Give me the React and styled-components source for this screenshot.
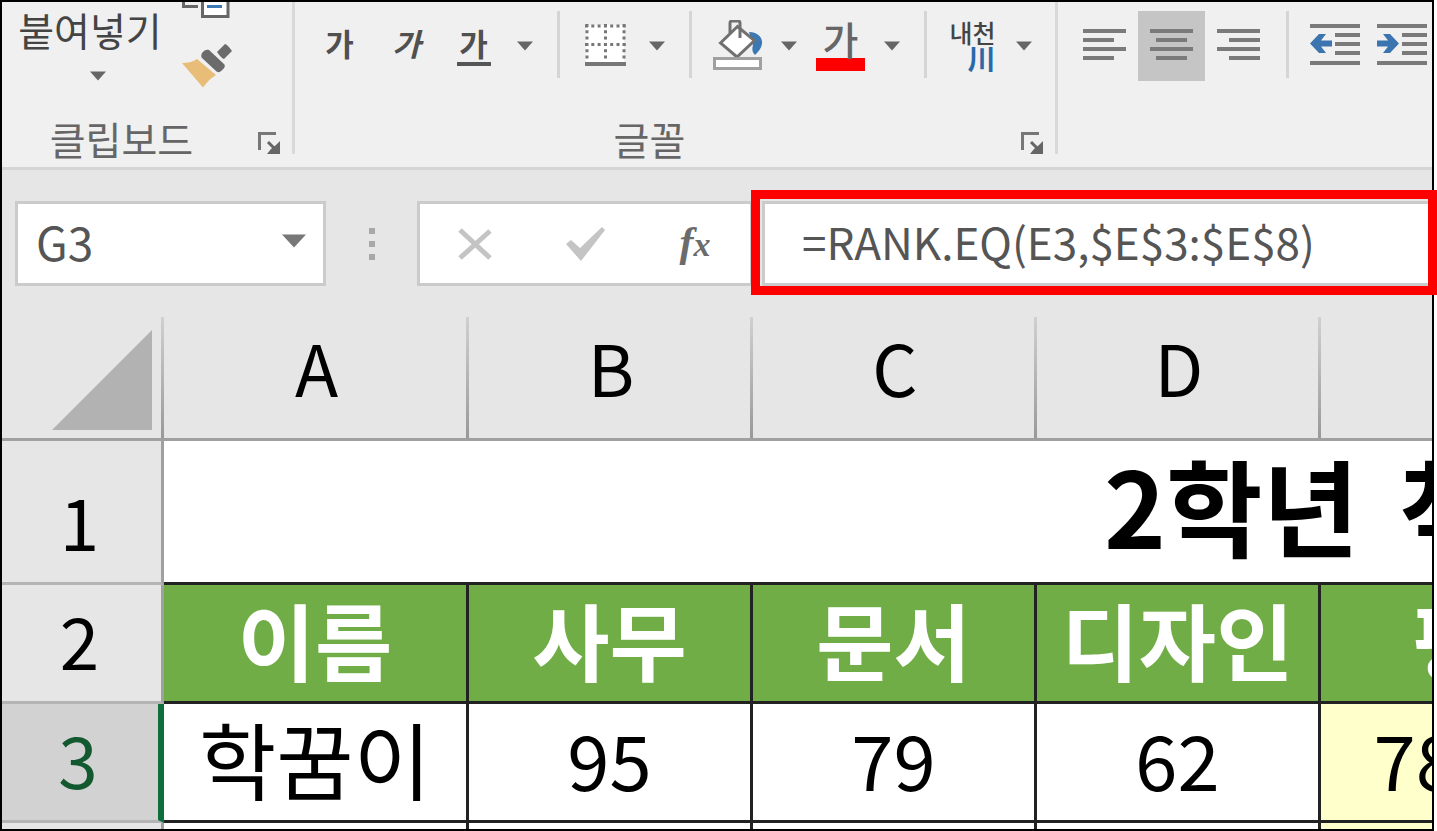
import React, {useState} from 'react';
import styled, {createGlobalStyle} from 'styled-components';

const columns = ['A', 'B', 'C', 'D', ''];
const subjects = ['이름', '사무', '문서', '디자인', '평균'];
const scores = ['학꿈이', '95', '79', '62', '78.667'];

const Arrow = () => (
	<svg width='16' height='10' viewBox='0 0 16 10' aria-hidden='true'>
		<path d='M0 0.5h16L8 9.5z' fill='#666'/>
	</svg>
)

const CopyIcon = () => (
	<svg width='48' height='16' viewBox='0 0 48 16' aria-hidden='true'>
		<path d='M1.500 0v4.500H16' fill='none' stroke='#666' strokeWidth='3'/>
		<path d='M20.500-4h25.500v18.500h-25.500z' fill='#fff' stroke='#666' strokeWidth='3'/>
		<path d='M25 4.500h15' stroke='#3c78b4' strokeWidth='3'/>
	</svg>
)

const BrushIcon = () => (
	<svg width='50' height='44' viewBox='0 0 50 44' aria-hidden='true'>
		<path d='M0 19c6 0 10-1 15-4l19 16c-5 3-9 7-13 12.500z' fill='#e8bd78'/>
		<path d='M20 9c2-3 5-4 7-3l15 14c2 2 0 5-3 7-2 2-4 1-5 0L20 14c-1-1-1-3 0-5z' fill='#6b6b6b'/>
		<path d='M35 8l8-8q2 0 7 7l-8 8q-2 0-7-7z' fill='#6b6b6b'/>
	</svg>
)

const LauncherIcon = () => (
	<svg width='22' height='22' viewBox='0 0 22 22' aria-hidden='true'>
		<path d='M1.500 18V1.500H18' fill='none' stroke='#777' strokeWidth='3'/>
		<path d='M10 10l7 7' stroke='#666' strokeWidth='3'/>
		<path d='M22 9v13H9l4-5 5-4z' fill='#666'/>
	</svg>
)

const BorderIcon = () => (
	<svg width='41' height='42' viewBox='0 0 41 42' aria-hidden='true'>
		<path d='M1 1h38v38H1z' fill='#fff'/>
		<path
			d='M0 2h41M0 20.500h41M2 0v36M20.500 0v36M39 0v36'
			fill='none'
			stroke='#777'
			strokeWidth='3'
			strokeDasharray='3 3.300'
		/>
		<path d='M0 40h41' stroke='#777' strokeWidth='4'/>
	</svg>
)

const BucketIcon = () => (
	<svg width='50' height='50' viewBox='0 0 50 50' aria-hidden='true'>
		<path d='M36 12c9 0 14 6 13 12-1 5-4 8-7 11-3-3-3-6-2-10z' fill='#3c78b4'/>
		<path d='M7.500 23L24.500 6.500l17 14L24 37z' fill='#fff' stroke='#707070' strokeWidth='3'/>
		<path d='M17 13V3q0-2 2-2h6q2 0 2 2v15' fill='none' stroke='#707070' strokeWidth='3'/>
		<path d='M1.500 38.500h46v10h-46z' fill='#fff' stroke='#a0a0a0' strokeWidth='3'/>
	</svg>
)

const alignPaths = {
	left: 'M0 2h43M0 11h31M0 20h43M0 29h31',
	center: 'M0 2h43M6 11h31M0 20h43M6 29h31',
	right: 'M0 2h43M12 11h31M0 20h43M12 29h31'
}

const AlignIcon = ({side}) => (
	<svg width='43' height='31' viewBox='0 0 43 31' aria-hidden='true'>
		<path d={alignPaths[side]} stroke='#7a7a7a' strokeWidth='4'/>
	</svg>
)

const IndentIcon = ({out}) => (
	<svg width='50' height='42' viewBox='0 0 50 42' aria-hidden='true'>
		<path d='M0 2h50M25 11h25M25 20h25M25 29h25M0 39h50' stroke='#7a7a7a' strokeWidth='4'/>
		<path
			d={out ? 'M0 19.500L9 10h7l-5 6.500h11v6H11l5 6.500H9z' : 'M22 19.500L13 10H6l5 6.500H0v6h11L6 29h7z'}
			fill='#3c74b0'
		/>
	</svg>
)

const Dropdown = ({label}) => (
	<DropButton type='button' aria-label={label}><Arrow/></DropButton>
)

const Ribbon = () => (
	<RibbonBar>
		<Group $width='290px'>
			<ClipboardTools>
				<PasteButton type='button'>붙여넣기<Arrow/></PasteButton>
				<ClipboardSide>
					<IconButton type='button' aria-label='복사'><CopyIcon/></IconButton>
					<IconButton type='button' aria-label='서식 복사'><BrushIcon/></IconButton>
				</ClipboardSide>
			</ClipboardTools>
			<GroupFooter>
				<Caption>클립보드</Caption>
				<Launcher type='button' aria-label='클립보드 옵션'><LauncherIcon/></Launcher>
			</GroupFooter>
		</Group>
		<GroupLine/>
		<Group $width='760px'>
			<Tools $start='11px'>
				<ToolButton type='button' aria-label='굵게'><Ga>가</Ga></ToolButton>
				<ToolButton type='button' aria-label='기울임꼴'><Ga $italic>가</Ga></ToolButton>
				<ToolButton type='button' aria-label='밑줄'><Ga $underline>가</Ga></ToolButton>
				<Dropdown label='밑줄 종류'/>
				<Separator/>
				<ToolButton type='button' aria-label='테두리'><BorderIcon/></ToolButton>
				<Dropdown label='테두리 종류'/>
				<Separator/>
				<ToolButton type='button' aria-label='채우기 색'><BucketIcon/></ToolButton>
				<Dropdown label='채우기 색 선택'/>
				<ToolButton type='button' aria-label='글꼴 색'><ColorGa>가</ColorGa></ToolButton>
				<Dropdown label='글꼴 색 선택'/>
				<Separator/>
				<ToolButton type='button' aria-label='윗주'>
					<Phonetic>내천<Hanja>川</Hanja></Phonetic>
				</ToolButton>
				<Dropdown label='윗주 설정'/>
			</Tools>
			<GroupFooter>
				<Caption>글꼴</Caption>
				<Launcher type='button' aria-label='글꼴 옵션'><LauncherIcon/></Launcher>
			</GroupFooter>
		</Group>
		<GroupLine/>
		<Group>
			<Tools $start='13px'>
				<ToolButton type='button' aria-label='왼쪽 맞춤'><AlignIcon side='left'/></ToolButton>
				<ToolButton type='button' aria-label='가운데 맞춤' aria-pressed='true' $active><AlignIcon side='center'/></ToolButton>
				<ToolButton type='button' aria-label='오른쪽 맞춤'><AlignIcon side='right'/></ToolButton>
				<Separator/>
				<ToolButton type='button' aria-label='내어쓰기'><IndentIcon out/></ToolButton>
				<ToolButton type='button' aria-label='들여쓰기'><IndentIcon/></ToolButton>
			</Tools>
		</Group>
	</RibbonBar>
)

const FormulaBar = () => {
	const [cell, setCell] = useState('G3');
	const [formula, setFormula] = useState('=RANK.EQ(E3,$E$3:$E$8)');

	return (
		<FormulaRow>
			<NameBox>
				<NameInput
					aria-label='이름 상자'
					value={cell}
					onChange={(e) => setCell(e.target.value)}
				/>
				<NameButton type='button' aria-label='이름 목록'>
					<svg width='24' height='14' viewBox='0 0 24 14' aria-hidden='true'>
						<path d='M0 0.500h24L12 13.500z' fill='#777'/>
					</svg>
				</NameButton>
			</NameBox>
			<Grip><i/><i/><i/></Grip>
			<FormulaActions>
				<ActionButton type='button' aria-label='취소'>
					<svg width='36' height='32' viewBox='0 0 36 32' aria-hidden='true'>
						<path d='M3 2l30 28M33 3L3 30' fill='none' stroke='#c4c4c4' strokeWidth='5'/>
					</svg>
				</ActionButton>
				<ActionButton type='button' aria-label='입력'>
					<svg width='40' height='34' viewBox='0 0 40 34' aria-hidden='true'>
						<path d='M1 17l5-4 9 8L37 0l3 3-24 31z' fill='#c4c4c4'/>
					</svg>
				</ActionButton>
				<ActionButton type='button' aria-label='함수 삽입'>
					<Fx>f<small>x</small></Fx>
				</ActionButton>
			</FormulaActions>
			<FormulaField>
				<FormulaInput
					aria-label='수식 입력줄'
					value={formula}
					onChange={(e) => setFormula(e.target.value)}
				/>
				<Highlight/>
			</FormulaField>
		</FormulaRow>
	)
}

const Sheet = () => (
	<SheetArea>
		<Grid>
			<colgroup>
				<Col $width='162px'/>
				<Col $width='305px'/>
				<Col $width='284px'/>
				<Col $width='284px'/>
				<Col $width='284px'/>
				<Col $width='340px'/>
			</colgroup>
			<thead>
				<tr>
					<Corner>
						<svg width='100' height='100' viewBox='0 0 100 100' aria-hidden='true'>
							<path d='M100 0v100H0z' fill='#b2b2b2'/>
						</svg>
					</Corner>
					{columns.map((name, i) => <ColumnHead key={i} scope='col'>{name}</ColumnHead>)}
				</tr>
			</thead>
			<tbody>
				<Row $height='144px'>
					<RowHead scope='row'>1</RowHead>
					<TitleCell colSpan={5}>2학년 <TitleWord>척</TitleWord></TitleCell>
				</Row>
				<Row $height='119px'>
					<RowHead scope='row'>2</RowHead>
					{subjects.map((name) => <SubjectCell key={name}>{name}</SubjectCell>)}
				</Row>
				<Row $height='119px'>
					<RowHead scope='row' $active>3</RowHead>
					{scores.map((value, i) => (
						<Cell key={value} $hangul={i === 0} $average={i === 4}>{value}</Cell>
					))}
				</Row>
				<Row $height='119px'>
					<RowHead scope='row' aria-label='4'/>
					{scores.map((value, i) => <Cell key={value} $average={i === 4}/>)}
				</Row>
			</tbody>
		</Grid>
	</SheetArea>
)

const App = () => (
	<>
		<GlobalStyle/>
		<Frame>
			<Ribbon/>
			<FormulaBar/>
			<Sheet/>
		</Frame>
	</>
)

const GlobalStyle = createGlobalStyle`
	*, *::before, *::after {
		box-sizing: border-box;
	}
	body {
		margin: 0;
		background: #fff;
		font-family: 'Noto Sans CJK KR', 'Noto Sans', sans-serif;
	}
	button, input {
		margin: 0;
		padding: 0;
		border: 0;
		background: none;
		font: inherit;
		color: inherit;
	}
	svg {
		display: block;
		flex: none;
	}
`

const Frame = styled.main`
	display: flex;
	flex-direction: column;
	height: 100vh;
	margin-right: 3px;
	border: 2px solid #000;
	background: #e6e6e6;
`

const RibbonBar = styled.header`
	display: flex;
	flex: none;
	height: 168px;
	overflow: hidden;
	background: #f0f0f0;
	border-bottom: 3px solid #d5d5d5;
`

const Group = styled.section`
	display: flex;
	flex: none;
	flex-direction: column;
	justify-content: space-between;
	width: ${({$width}) => $width || 'auto'};
`

const GroupLine = styled.div`
	flex: none;
	width: 3px;
	height: 152px;
	background: #d9d9d9;
`

const ClipboardTools = styled.div`
	display: flex;
`

const PasteButton = styled.button`
	display: flex;
	flex-direction: column;
	align-items: center;
	gap: 16px;
	width: 176px;
	padding-top: 1px;
	font-size: 39px;
	line-height: 52px;
	color: #444;
	white-space: nowrap;

	svg {
		margin-left: 16px;
	}
`

const ClipboardSide = styled.div`
	display: flex;
	flex-direction: column;
	gap: 26px;
	padding-left: 4px;
`

const IconButton = styled.button`
	display: flex;
`

const GroupFooter = styled.div`
	display: flex;
	align-items: center;
	height: 54px;
`

const Caption = styled.div`
	flex: 1;
	padding-bottom: 4px;
	font-size: 39px;
	line-height: 54px;
	text-align: center;
	color: #666;
`

const Launcher = styled.button`
	width: 51px;
	padding: 6px 0 0 17px;
`

const Tools = styled.div`
	display: flex;
	align-items: flex-start;
	padding: 9px 0 0 ${({$start}) => $start};
`

const ToolButton = styled.button`
	display: flex;
	flex: none;
	align-items: center;
	justify-content: center;
	width: 67px;
	height: 70px;
	padding-bottom: 3px;
	background: ${({$active}) => $active ? '#c5c5c5' : 'transparent'};
`

const DropButton = styled.button`
	display: flex;
	flex: none;
	align-items: center;
	justify-content: center;
	width: 36px;
	height: 70px;
`

const Separator = styled.div`
	flex: none;
	width: 3px;
	height: 67px;
	margin: 0 12px 0 14px;
	background: #d5d5d5;
`

const Ga = styled.span`
	width: 34px;
	height: 42px;
	border-bottom: 4px solid ${({$underline}) => $underline ? '#555' : 'transparent'};
	font-size: 31px;
	font-weight: 700;
	font-style: ${({$italic}) => $italic ? 'italic' : 'normal'};
	line-height: 38px;
	text-align: center;
	color: #505050;
`

const ColorGa = styled.span`
	width: 49px;
	height: 52px;
	border-bottom: 13px solid #f00;
	font-size: 39px;
	font-weight: 500;
	line-height: 38px;
	text-align: center;
	color: #666;
`

const Phonetic = styled.span`
	display: flex;
	flex-direction: column;
	align-items: flex-end;
	font-size: 25px;
	font-weight: 500;
	line-height: 26px;
	color: #444;
`

const Hanja = styled.span`
	font-size: 28px;
	font-weight: 700;
	color: #2a69a8;
`

const FormulaRow = styled.div`
	display: flex;
	flex: none;
	height: 141px;
	padding: 31px 0 25px 13px;
`

const NameBox = styled.div`
	display: flex;
	align-items: center;
	width: 311px;
	border: 3px solid #cbcbcb;
	background: #fff;
`

const NameInput = styled.input`
	flex: 1;
	min-width: 0;
	height: 79px;
	padding: 0 0 6px 18px;
	font-size: 46px;
	color: #555;
	outline: none;
`

const NameButton = styled.button`
	padding: 0 17px 6px;
`

const Grip = styled.div`
	display: flex;
	flex-direction: column;
	align-items: center;
	justify-content: center;
	gap: 7px;
	width: 91px;

	i {
		width: 6px;
		height: 6px;
		background: #a8a8a8;
	}
`

const FormulaActions = styled.div`
	display: flex;
	width: 336px;
	margin-right: 9px;
	border: 3px solid #cbcbcb;
	background: #fff;
`

const ActionButton = styled.button`
	display: flex;
	flex: 1;
	align-items: center;
	justify-content: center;
`

const Fx = styled.span`
	font-family: 'Liberation Serif', serif;
	font-size: 42px;
	font-style: italic;
	font-weight: 700;
	line-height: 48px;
	color: #6b6b6b;

	small {
		font-size: 34px;
	}
`

const FormulaField = styled.div`
	position: relative;
	flex: 1;
	border: 3px solid #cbcbcb;
	border-right: 0;
	background: #fff;
`

const FormulaInput = styled.input`
	width: 100%;
	height: 79px;
	padding: 0 0 6px 37px;
	font-size: 44px;
	color: #555;
	outline: none;
`

const Highlight = styled.div`
	position: absolute;
	inset: -14px -5px -12px -14px;
	border: 9px solid #f00;
	pointer-events: none;
`

const SheetArea = styled.div`
	flex: 1;
	min-height: 0;
	overflow: hidden;
`

const Grid = styled.table`
	width: 1659px;
	table-layout: fixed;
	border-spacing: 0;
`

const Col = styled.col`
	width: ${({$width}) => $width};
`

const Row = styled.tr`
	height: ${({$height}) => $height};
`

/* the column lines fade out towards the formula bar */
const HeadCell = styled.th`
	height: 130px;
	padding: 0;
	border-bottom: 3px solid #a0a0a0;
	background: linear-gradient(#d0d0d0, #999) right bottom / 3px 121px no-repeat;
`

const Corner = styled(HeadCell)`
	padding: 19px 0 8px 50px;
	vertical-align: top;
`

const ColumnHead = styled(HeadCell)`
	padding-bottom: 18px;
	font-size: 71px;
	font-weight: 400;
	line-height: 90px;
`

const RowHead = styled.th`
	padding: 0 4px 8px 0;
	border-right: ${({$active}) => $active ? '6px solid #0e6e3c' : '3px solid #a0a0a0'};
	border-bottom: 3px solid #b4b4b4;
	background: ${({$active}) => $active ? '#d2d2d2' : '#e6e6e6'};
	font-size: 71px;
	font-weight: 400;
	line-height: 108px;
	vertical-align: bottom;
	color: ${({$active}) => $active ? '#12592f' : '#000'};
`

const Cell = styled.td`
	padding: 0 0 8px;
	border-right: 3px solid #222;
	border-bottom: 3px solid #222;
	background: ${({$average}) => $average ? '#ffffcc' : '#fff'};
	font-size: ${({$hangul}) => $hangul ? '84px' : '76px'};
	line-height: 100px;
	text-align: center;
	white-space: nowrap;
`

const SubjectCell = styled(Cell)`
	background: #70ad47;
	font-size: 84px;
	font-weight: 700;
	color: #fff;
`

const TitleCell = styled(Cell)`
	padding: 0 0 18px 940px;
	font-size: 105px;
	font-weight: 700;
	line-height: 120px;
	text-align: left;
`

const TitleWord = styled.span`
	margin-left: 16px;
`

export default App;
